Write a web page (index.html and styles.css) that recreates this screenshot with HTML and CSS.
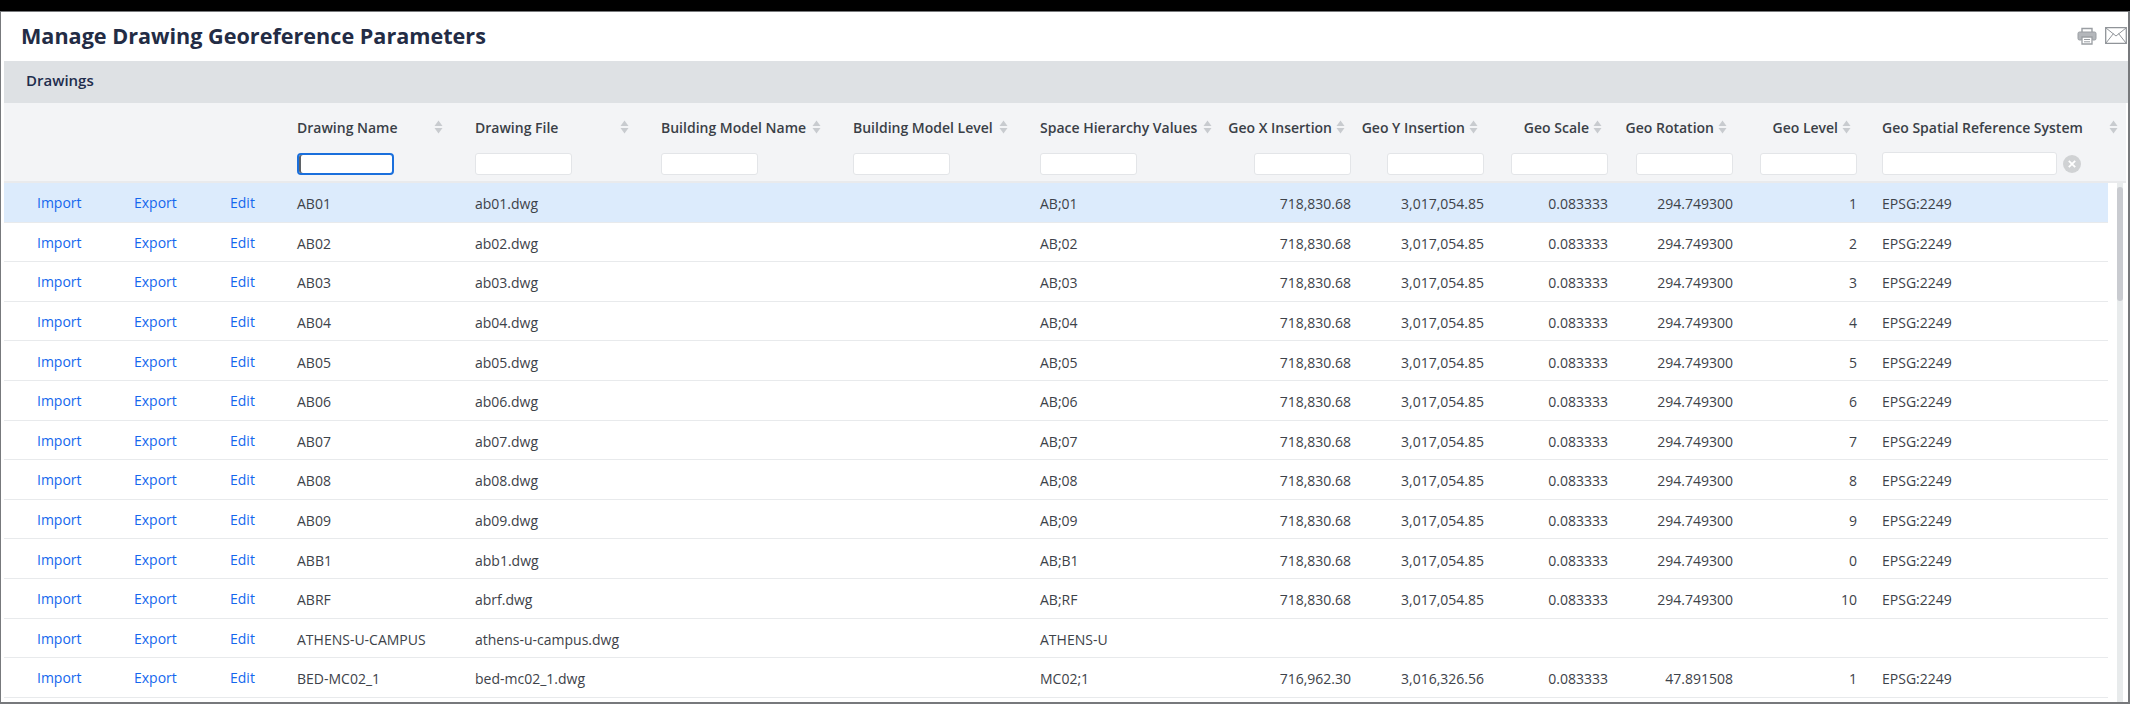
FILE: index.html
```html
<!DOCTYPE html>
<html lang="en">
<head>
    <meta charset="UTF-8">
    <meta name="viewport" content="width=device-width, initial-scale=1.0">
    <title>Manage Drawing Georeference Parameters</title>
    <link rel="stylesheet" href="styles.css">
</head>
<body>
    <div class="window">
        <div class="title-bar">
            <h1>Manage Drawing Georeference Parameters</h1>
            <div class="title-icons">
                <svg class="icon-print" width="20" height="18" viewBox="0 0 20 18">
                    <path d="M5 5V1.5h10V5" fill="none" stroke="#9a9ea3" stroke-width="1.4"/>
                    <path d="M4.5 13h-2A1.5 1.5 0 0 1 1 11.5v-5A1.5 1.5 0 0 1 2.5 5h15A1.5 1.5 0 0 1 19 6.5v5a1.5 1.500 0 0 1-1.500 1.500h-2" fill="#b4b7bb" stroke="#9a9ea3"/>
                    <path d="M5 10h10v7H5z" fill="#fff" stroke="#9a9ea3" stroke-width="1.3"/>
                    <path d="M7 12.5h6M7 14.8h6" stroke="#9a9ea3"/>
                </svg>
                <svg class="icon-mail" width="22" height="17" viewBox="0 0 22 17">
                    <path d="M.7.7h20.600v15.600H.7z" fill="#fff" stroke="#909499" stroke-width="1.3"/>
                    <path d="M1 1l10 8 10-8M1 16l7.500-9.500M21 16l-7.500-9.500" fill="none" stroke="#909499"/>
                </svg>
            </div>
        </div>
        <div class="panel-title">Drawings</div>
        <table class="grid head-grid">
            <colgroup>
                <col class="c-action1"><col class="c-action2"><col class="c-action3">
                <col class="c-name"><col class="c-file"><col class="c-bmname"><col class="c-bmlevel"><col class="c-space">
                <col class="c-x"><col class="c-y"><col class="c-scale"><col class="c-rot"><col class="c-level"><col class="c-srs-head">
            </colgroup>
            <thead>
                <tr class="title-row" id="titleRow"></tr>
                <tr class="filter-row" id="filterRow"></tr>
            </thead>
        </table>
        <div class="body-wrap">
            <table class="grid body-grid">
                <colgroup>
                    <col class="c-action1"><col class="c-action2"><col class="c-action3">
                    <col class="c-name"><col class="c-file"><col class="c-bmname"><col class="c-bmlevel"><col class="c-space">
                    <col class="c-x"><col class="c-y"><col class="c-scale"><col class="c-rot"><col class="c-level"><col class="c-srs">
                </colgroup>
                <tbody id="drawingRows"></tbody>
            </table>
            <div class="scroll-track"><div class="scroll-thumb"></div></div>
        </div>
    </div>

    <script src="app.js"></script>
</body>
</html>
```

FILE: styles.css
```css
* {
    box-sizing: border-box;
}
html, body {
    height: 100%;
}
body {
    margin: 0;
    padding-top: 11px;
    background-color: #000;
    font-family: "Open Sans", Arial, sans-serif;
    font-size: 14px;
    color: #3d4249;
    overflow: hidden;
}
.window {
    height: 693px;
    padding-left: 3px;
    background-color: #fff;
    border-style: solid;
    border-color: #77797c;
    border-width: 1px 2px 2px 1px;
    overflow: hidden;
}
.title-bar {
    display: flex;
    justify-content: space-between;
    align-items: center;
    height: 49px;
    padding-left: 17px;
    padding-bottom: 2px;
}
h1 {
    margin: 0;
    font-size: 21.6px;
    font-weight: 700;
    color: #232c45;
}
.title-icons {
    display: flex;
    align-items: center;
    gap: 8px;
    margin-right: 1px;
}
.panel-title {
    height: 42px;
    line-height: 39px;
    padding-left: 22px;
    background-color: #dee1e4;
    font-size: 15px;
    font-weight: 600;
    color: #1f2d4d;
}
.grid {
    table-layout: fixed;
    border-collapse: separate;
    border-spacing: 0;
}
.head-grid {
    width: 2122px;
    background-color: #f3f4f6;
}
.body-grid {
    width: 2104px;
    flex: none;
    align-self: flex-start;
}
.c-action1 { width: 97px; }
.c-action2 { width: 96px; }
.c-action3 { width: 92px; }
.c-name { width: 178px; }
.c-file { width: 186px; }
.c-bmname { width: 192px; }
.c-bmlevel { width: 187px; }
.c-space { width: 188px; }
.c-x { width: 139px; }
.c-y { width: 133px; }
.c-scale { width: 124px; }
.c-rot { width: 125px; }
.c-level { width: 124px; }
.c-srs-head { width: 261px; }
.c-srs { width: 243px; }
th, td {
    padding: 0 8px;
    font-weight: normal;
    text-align: left;
    white-space: nowrap;
}
.title-row th {
    height: 46px;
    padding-top: 2px;
    font-size: 14px;
    font-weight: 600;
    color: #3a3f47;
}
.th-label {
    display: flex;
    align-items: center;
    justify-content: space-between;
}
.title-row .sort-far {
    padding-right: 24px;
}
.num .th-label {
    justify-content: flex-end;
    gap: 4px;
    padding-right: 6px;
}
.sort-icon {
    flex: none;
    width: 9px;
    height: 14px;
}
.filter-row th {
    height: 34px;
    padding-top: 4px;
    vertical-align: top;
    border-bottom: 2px solid #e9eaec;
}
.filter-row input {
    display: block;
    width: 97px;
    height: 22px;
    padding: 0 2px;
    background-color: #fff;
    border: 1px solid #e3e5e8;
    border-radius: 3px;
    outline: none;
}
.num input {
    margin-left: auto;
}
.filter-row input.focused {
    border: 2px solid #1a6fdc;
    border-radius: 4px;
    box-shadow: inset 2px 0 0 #5f6367;
}
.srs-filter {
    display: flex;
    align-items: center;
    gap: 6px;
}
.filter-row .col-srs {
    padding-top: 3px;
}
.filter-row .srs-filter input {
    width: 175px;
    height: 23px;
}
th.col-srs, td.col-srs {
    padding-left: 17px;
}
.clear-icon {
    flex: none;
}
.body-wrap {
    display: flex;
    height: 520px;
    overflow: hidden;
}
.body-grid td {
    height: 39.6px;
    padding-top: 3px;
    border-bottom: 1px solid #e8eaec;
}
.body-grid .num {
    text-align: right;
}
.body-grid tr.selected td {
    background-color: #dcebfc;
}
.body-grid a {
    position: relative;
    top: -1px;
    color: #1467ee;
    text-decoration: none;
}
.body-grid .action-cell {
    padding-left: 33px;
}
.scroll-track {
    flex: none;
    width: 6px;
    margin-left: 9px;
    background-color: #e8ebec;
}
.scroll-thumb {
    width: 6px;
    height: 114px;
    margin-top: 4px;
    background-color: #c9cbd0;
    border-radius: 3px;
}
```

FILE: app.js
```js
const columns = [
    { title: '' }, { title: '' }, { title: '' },
    { title: 'Drawing Name', far: true },
    { title: 'Drawing File', far: true },
    { title: 'Building Model Name', far: true },
    { title: 'Building Model Level', far: true },
    { title: 'Space Hierarchy Values' },
    { title: 'Geo X Insertion', num: true },
    { title: 'Geo Y Insertion', num: true },
    { title: 'Geo Scale', num: true },
    { title: 'Geo Rotation', num: true },
    { title: 'Geo Level', num: true },
    { title: 'Geo Spatial Reference System', srs: true }
];

const sortIcon = '<svg class="sort-icon" viewBox="0 0 9 14"><path d="M4.5 0.5L8.5 6H.5z" fill="#c8cbcf"/><path d="M4.5 13.5L.5 8h8z" fill="#c8cbcf"/></svg>';
const clearIcon = '<svg class="clear-icon" width="18" height="18" viewBox="0 0 18 18"><circle cx="9" cy="9" r="9" fill="#d0d2d4"/><path d="M5.8 5.8l6.4 6.4M12.200 5.8l-6.400 6.400" stroke="#fff" stroke-width="1.8"/></svg>';

const titleRow = document.getElementById('titleRow');
const filterRow = document.getElementById('filterRow');

columns.forEach((col, i) => {
    const cls = col.num ? 'num' : col.srs ? 'col-srs' : col.far ? 'sort-far' : '';
    if (!col.title) {
        titleRow.innerHTML += '<th></th>';
        filterRow.innerHTML += '<th></th>';
        return;
    }
    titleRow.innerHTML += `<th class="${cls}"><div class="th-label"><span>${col.title}</span>${sortIcon}</div></th>`;
    if (col.srs) {
        filterRow.innerHTML += `<th class="${cls}"><div class="srs-filter"><input type="text">${clearIcon}</div></th>`;
    } else {
        filterRow.innerHTML += `<th class="${col.num ? 'num' : ''}"><input type="text" class="${i === 3 ? 'focused' : ''}"></th>`;
    }
});

const geo = ['718,830.68', '3,017,054.85', '0.083333', '294.749300'];
const rows = [
    ['AB01', 'ab01.dwg', 'AB;01', ...geo, '1', 'EPSG:2249'],
    ['AB02', 'ab02.dwg', 'AB;02', ...geo, '2', 'EPSG:2249'],
    ['AB03', 'ab03.dwg', 'AB;03', ...geo, '3', 'EPSG:2249'],
    ['AB04', 'ab04.dwg', 'AB;04', ...geo, '4', 'EPSG:2249'],
    ['AB05', 'ab05.dwg', 'AB;05', ...geo, '5', 'EPSG:2249'],
    ['AB06', 'ab06.dwg', 'AB;06', ...geo, '6', 'EPSG:2249'],
    ['AB07', 'ab07.dwg', 'AB;07', ...geo, '7', 'EPSG:2249'],
    ['AB08', 'ab08.dwg', 'AB;08', ...geo, '8', 'EPSG:2249'],
    ['AB09', 'ab09.dwg', 'AB;09', ...geo, '9', 'EPSG:2249'],
    ['ABB1', 'abb1.dwg', 'AB;B1', ...geo, '0', 'EPSG:2249'],
    ['ABRF', 'abrf.dwg', 'AB;RF', ...geo, '10', 'EPSG:2249'],
    ['ATHENS-U-CAMPUS', 'athens-u-campus.dwg', 'ATHENS-U', '', '', '', '', '', ''],
    ['BED-MC02_1', 'bed-mc02_1.dwg', 'MC02;1', '716,962.30', '3,016,326.56', '0.083333', '47.891508', '1', 'EPSG:2249']
];

const drawingRows = document.getElementById('drawingRows');
drawingRows.innerHTML = rows.map((r, i) => `
    <tr class="${i === 0 ? 'selected' : ''}">
        <td class="action-cell"><a href="#">Import</a></td>
        <td class="action-cell"><a href="#">Export</a></td>
        <td class="action-cell"><a href="#">Edit</a></td>
        <td>${r[0]}</td>
        <td>${r[1]}</td>
        <td></td>
        <td></td>
        <td>${r[2]}</td>
        <td class="num">${r[3]}</td>
        <td class="num">${r[4]}</td>
        <td class="num">${r[5]}</td>
        <td class="num">${r[6]}</td>
        <td class="num">${r[7]}</td>
        <td class="col-srs">${r[8]}</td>
    </tr>`).join('');
```
